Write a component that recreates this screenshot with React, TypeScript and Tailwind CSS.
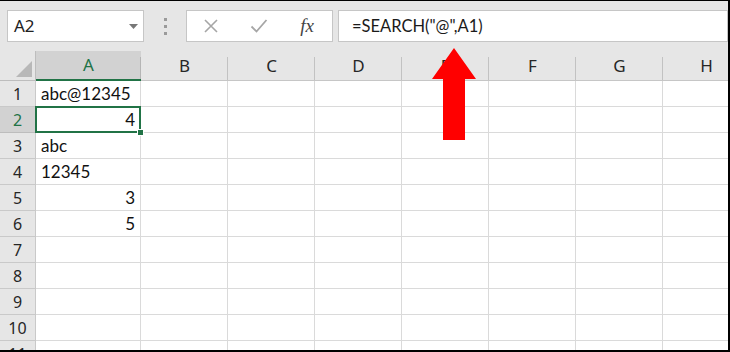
import React from "react";

const cols = ["A", "B", "C", "D", "E", "F", "G", "H"];

const cells: Record<number, { text: string; align: "left" | "right" }> = {
  1: { text: "abc@12345", align: "left" },
  2: { text: "4", align: "right" },
  3: { text: "abc", align: "left" },
  4: { text: "12345", align: "left" },
  5: { text: "3", align: "right" },
  6: { text: "5", align: "right" },
};

const rows = [1, 2, 3, 4, 5, 6, 7, 8, 9, 10, 11];

const cellFont = { fontFamily: "Lato, 'Liberation Sans', sans-serif" };
const uiFont = { fontFamily: "'Noto Sans', 'Liberation Sans', sans-serif" };

const App: React.FC = () => {
  return (
    <div className="relative w-[730px] h-[352px] overflow-hidden bg-white border-t border-r-2 border-b-2 border-black">
      {/* formula bar */}
      <div className="flex items-center h-[50px] bg-[#e6e6e6] pl-[7px]">
        <div
          className="flex items-center justify-between w-[137px] h-[32px] bg-white border border-[#c6c6c6] pl-[6px] pr-[5px] text-[17px] text-[#222]"
          style={uiFont}
        >
          <span>A2</span>
          <svg width="9" height="5" viewBox="0 0 9 5">
            <path d="M0 0 L9 0 L4.5 5 Z" fill="#777" />
          </svg>
        </div>
        <div className="flex flex-col items-center justify-center gap-[4px] w-[42px]">
          <span className="w-[3px] h-[3px] bg-[#9a9a9a]" />
          <span className="w-[3px] h-[3px] bg-[#9a9a9a]" />
          <span className="w-[3px] h-[3px] bg-[#9a9a9a]" />
        </div>
        <div className="flex items-center w-[147px] h-[32px] bg-white border border-[#c6c6c6]">
          <div className="flex justify-center w-[48px]">
            <svg width="16" height="16" viewBox="0 0 16 16">
              <path d="M2 2 L14 14 M14 2 L2 14" stroke="#a6a6a6" strokeWidth="1.6" fill="none" />
            </svg>
          </div>
          <div className="flex justify-center w-[48px]">
            <svg width="18" height="16" viewBox="0 0 18 16">
              <path d="M1.5 8.5 L6.5 13.5 L16.5 2" stroke="#a6a6a6" strokeWidth="1.8" fill="none" />
            </svg>
          </div>
          <div
            className="flex justify-center w-[48px] italic text-[19px] text-[#444]"
            style={{ fontFamily: "'Liberation Serif', 'DejaVu Serif', serif" }}
          >
            fx
          </div>
        </div>
        <div
          className="flex items-center flex-1 h-[32px] ml-[5px] bg-white border border-[#c6c6c6] pl-[13px] text-[16.5px] text-[#1a1a1a]"
          style={cellFont}
        >
          =SEARCH("@",A1)
        </div>
      </div>

      {/* sheet */}
      <div className="grid grid-cols-[36px_105px_87px_87px_87px_87px_87px_87px_87px] w-[763px]">
        {/* header row */}
        <div className="relative h-[30px] bg-[#e6e6e6] border-r border-b border-[#bdbdbd]">
          <svg className="absolute right-[3px] bottom-[3px]" width="16" height="16" viewBox="0 0 16 16">
            <path d="M16 0 L16 16 L0 16 Z" fill="#b8b8b8" />
          </svg>
        </div>
        {cols.map((c) => (
          <div
            key={c}
            className={
              c === "A"
                ? "relative flex items-center justify-center h-[30px] bg-[#d2d2d2] border-b-2 border-[#217346] text-[17px] text-[#217346]"
                : "relative flex items-center justify-center h-[30px] bg-[#e6e6e6] border-b border-[#c6c6c6] text-[17px] text-[#262626] after:absolute after:right-0 after:top-[6px] after:bottom-0 after:w-px after:bg-[#c2c2c2]"
            }
            style={uiFont}
          >
            {c}
            {c === "A" && <span className="absolute right-0 top-[6px] bottom-0 w-px bg-[#b5b5b5]" />}
          </div>
        ))}

        {rows.map((r) => (
          <React.Fragment key={r}>
            <div
              className={
                r === 2
                  ? "flex items-center justify-center h-[26px] bg-[#d2d2d2] border-r border-b border-[#bdbdbd] text-[16px] text-[#217346]"
                  : "flex items-center justify-center h-[26px] bg-[#e6e6e6] border-r border-b border-[#c9c9c9] text-[16px] text-[#262626]"
              }
              style={uiFont}
            >
              {r}
            </div>
            {cols.map((c) => {
              const data = c === "A" ? cells[r] : undefined;
              return (
                <div
                  key={c}
                  className={
                    "relative flex items-center h-[26px] border-r border-b border-[#dadada] px-[5px] pt-[1px] text-[17px] text-[#111] " +
                    (data?.align === "right" ? "justify-end" : "justify-start")
                  }
                  style={cellFont}
                >
                  {data?.text}
                  {c === "A" && r === 2 && (
                    <span className="absolute z-10 -left-px -top-px -right-px -bottom-px border-2 border-[#217346]">
                      <span className="absolute -right-[5px] -bottom-[5px] w-[7px] h-[7px] bg-[#217346] border border-white" />
                    </span>
                  )}
                </div>
              );
            })}
          </React.Fragment>
        ))}
      </div>

      {/* red arrow */}
      <svg className="absolute left-[432px] top-[47px]" width="45" height="93" viewBox="0 0 45 93">
        <path d="M22 0 L44 31 L33 31 L33 92 L11 92 L11 31 L0 31 Z" fill="#ff0000" />
      </svg>
    </div>
  );
};

export default App;
